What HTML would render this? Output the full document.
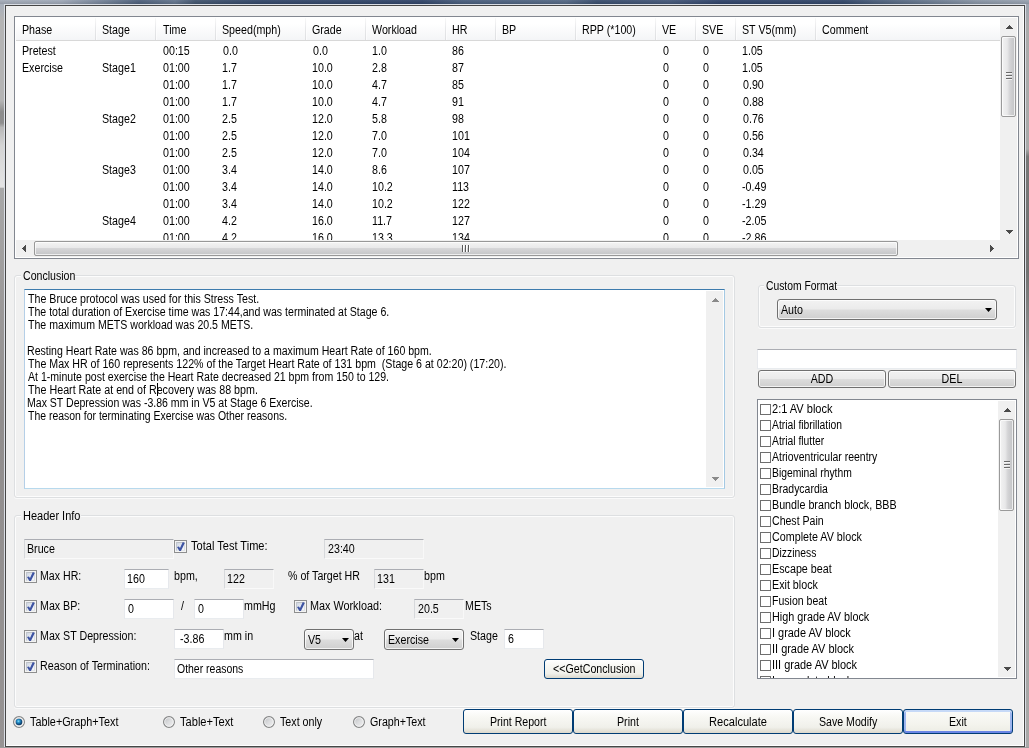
<!DOCTYPE html>
<html><head><meta charset="utf-8"><title>Stress Test Report</title>
<style>
html,body{margin:0;padding:0}
body{width:1029px;height:748px;overflow:hidden;position:relative;background:#f0f0f0;font-family:"Liberation Sans",sans-serif}
div,span,svg.abs{position:absolute;box-sizing:content-box}
#root{left:0;top:0;width:1029px;height:748px;will-change:transform}
.t{white-space:pre;font:12px/13px "Liberation Sans",sans-serif;color:#000;transform-origin:0 0;transform:scaleX(0.89)}
.c{text-align:center}
.clip{overflow:hidden}
#ftop{left:0;top:0;width:1029px;height:4px;background:linear-gradient(90deg,#a5adba 0,#a0a9b8 6%,#6f7e94 10.6%,#4f617c 13.5%,#66778f 17%,#43566f 19%,#34486a 25%,#32466a 41%,#4a5f7e 45%,#566a86 55%,#3a4e6e 58%,#46597a 65%,#30446a 70%,#34486a 82%,#4c5f7b 85%,#6a7a90 90%,#8a96a6 95%,#9aa4b2 100%)}
#ftop:after{content:"";position:absolute;left:0;top:0;width:1029px;height:4px;background:linear-gradient(180deg,rgba(255,255,255,.06),rgba(0,0,0,.1))}
#fleft{left:0;top:4px;width:4px;height:744px;background:linear-gradient(180deg,#a8b0bc 0,#b4b4b4 2%,#b4b4b4 13%,#8c8c8c 14.5%,#8e8e8e 16%,#b8b8b8 16.6%,#d4d4d4 19%,#e4e4e4 24.6%,#a8a8a8 24.8%,#9c9a9a 40%,#918e8e 56%,#969393 100%)}
#fright{left:1026px;top:4px;width:3px;height:744px;background:linear-gradient(180deg,#9ea6b2 0,#ababab 3%,#a9a9a9 19.5%,#787878 20.5%,#727272 36%,#8c8c8c 44%,#a4a4a4 50%,#a8a8a8 100%)}
#fbot{left:0;top:747px;width:1029px;height:1px;background:#9c9c9c}
#flight{left:4px;top:4px;width:1022px;height:743px;background:#d9dde4}
#fdark{left:5px;top:5px;width:1020px;height:742px;background:#464646}
#client{left:6px;top:6px;width:1017px;height:739px;border:solid #fff;border-width:0 1px 1px 0;background:#f0f0f0}
.lv{border:1px solid #828790;background:#fff}
.lvh{background:linear-gradient(180deg,#fff 0,#fff 25%,#f4f5f7 100%)}
.sep{background:linear-gradient(180deg,#f8f8f8,#e6e7e9 50%,#dedfe1)}
.sepw{background:linear-gradient(180deg,#fff,#fbfbfc)}
.sbtrack{background:#f0f0f0}
.vthumb{border:1px solid #9a9a9a;border-radius:2px;box-sizing:border-box;background:linear-gradient(90deg,#f3f3f3 0,#e8e8e9 40%,#d4d4d6 60%,#c2c3c5 100%);box-shadow:inset 0 0 0 1px rgba(255,255,255,.7)}
.vthumb i{position:absolute;left:4px;width:6px;height:1px;background:#6a6a6a;box-shadow:0 1px 0 #f4f4f4}
.hthumb{border:1px solid #989898;border-radius:2px;box-sizing:border-box;background:linear-gradient(180deg,#f4f4f4 0,#e9e9ea 45%,#d6d6d8 50%,#c4c5c7 100%);box-shadow:inset 0 0 0 1px rgba(255,255,255,.7)}
.hthumb i{position:absolute;top:3px;width:1px;height:7px;background:#5a5a5a;box-shadow:1px 0 0 #fff}
.gb{border:1px solid #dddfe1;border-radius:3px;box-shadow:inset 0 0 0 1px #fcfcfc,0 1px 0 #fafafa}
.edit{border:1px solid;border-color:#abadb3 #e6e8ec #e9ecef #e6e8ec;background:#fff}
.edit.ro{background:#f0f0f0;border-color:#abadb3 #f8f8f8 #fafafa #d6d8db}
.edit.focus{border-color:#3d7bad #a4c9e3 #b7d9ed #b5cfe7}
.combo{border:1px solid #707070;border-radius:3px;background:linear-gradient(180deg,#f2f2f2 0,#ebebeb 48%,#dddddd 52%,#cfcfcf 100%);box-shadow:inset 0 0 0 1px rgba(255,255,255,.75)}
.w7btn{border:1px solid #707070;border-radius:3px;background:linear-gradient(180deg,#f2f2f2 0,#ebebeb 48%,#dddddd 52%,#cfcfcf 100%);box-shadow:inset 0 0 0 1px rgba(255,255,255,.75)}
.clb{border:1px solid #828790;background:#fff}
.fcb{border:1px solid #6e6e6e;background:#fff}
.cb{border:1px solid #8e8f8f;background:#f4f4f4}
.cb b{position:absolute;left:1px;top:1px;width:7px;height:7px;border:1px solid;border-color:#bcc0c6 #dcdfe3 #e3e6e9 #c3c7cd;background:linear-gradient(135deg,#cfd6e2,#e9edf4 60%,#f6f7fa)}
.cb svg{position:absolute;left:-1px;top:-1px}
.radio{border:1px solid #8e8f8f;border-radius:50%;background:radial-gradient(circle at 50% 50%,#fdfdfd 0,#e9e9e9 60%,#d6d6d6 100%)}
.radio.on b{position:absolute;left:2px;top:2px;width:6px;height:6px;border-radius:50%;background:radial-gradient(circle at 40% 35%,#8fe0f5 0,#2aa0d8 35%,#14507f 80%,#0d3a66 100%)}
.xpbtn{border:1px solid #003c74;border-radius:3px;background:linear-gradient(180deg,#fff 0,#f8f8f4 30%,#f0f0ea 75%,#dcd8cc 100%)}
.xpbtn.def{box-shadow:inset 0 2px 0 #c6d9f7,inset 0 -2px 0 #6b86e6,inset 2px 0 0 #9db5ee,inset -2px 0 0 #9db5ee;background:linear-gradient(180deg,#fbfbf8 0,#f4f4ee 60%,#ecece4 100%)}
</style></head>
<body>
<div id="root">
<div id="ftop"></div><div id="fleft"></div><div id="fright"></div><div id="fbot"></div>
<div id="flight"></div><div id="fdark"></div><div id="client"></div>
<div class="lv" style="left:14px;top:16px;width:1003px;height:241px;"></div>
<div class="lvh" style="left:16px;top:18px;width:984px;height:22px;"></div>
<div class="" style="left:16px;top:40px;width:984px;height:1px;background:#d8d8d8"></div>
<span class="t" style="left:22px;top:24px;">Phase</span>
<span class="t" style="left:102px;top:24px;">Stage</span>
<div class="sep" style="left:95px;top:18px;width:1px;height:22px;"></div>
<div class="sepw" style="left:96px;top:18px;width:1px;height:22px;"></div>
<span class="t" style="left:163px;top:24px;">Time</span>
<div class="sep" style="left:155px;top:18px;width:1px;height:22px;"></div>
<div class="sepw" style="left:156px;top:18px;width:1px;height:22px;"></div>
<span class="t" style="left:222px;top:24px;">Speed(mph)</span>
<div class="sep" style="left:215px;top:18px;width:1px;height:22px;"></div>
<div class="sepw" style="left:216px;top:18px;width:1px;height:22px;"></div>
<span class="t" style="left:312px;top:24px;">Grade</span>
<div class="sep" style="left:305px;top:18px;width:1px;height:22px;"></div>
<div class="sepw" style="left:306px;top:18px;width:1px;height:22px;"></div>
<span class="t" style="left:372px;top:24px;">Workload</span>
<div class="sep" style="left:365px;top:18px;width:1px;height:22px;"></div>
<div class="sepw" style="left:366px;top:18px;width:1px;height:22px;"></div>
<span class="t" style="left:452px;top:24px;">HR</span>
<div class="sep" style="left:445px;top:18px;width:1px;height:22px;"></div>
<div class="sepw" style="left:446px;top:18px;width:1px;height:22px;"></div>
<span class="t" style="left:502px;top:24px;">BP</span>
<div class="sep" style="left:495px;top:18px;width:1px;height:22px;"></div>
<div class="sepw" style="left:496px;top:18px;width:1px;height:22px;"></div>
<span class="t" style="left:582px;top:24px;">RPP (*100)</span>
<div class="sep" style="left:575px;top:18px;width:1px;height:22px;"></div>
<div class="sepw" style="left:576px;top:18px;width:1px;height:22px;"></div>
<span class="t" style="left:662px;top:24px;">VE</span>
<div class="sep" style="left:655px;top:18px;width:1px;height:22px;"></div>
<div class="sepw" style="left:656px;top:18px;width:1px;height:22px;"></div>
<span class="t" style="left:702px;top:24px;">SVE</span>
<div class="sep" style="left:695px;top:18px;width:1px;height:22px;"></div>
<div class="sepw" style="left:696px;top:18px;width:1px;height:22px;"></div>
<span class="t" style="left:742px;top:24px;">ST V5(mm)</span>
<div class="sep" style="left:735px;top:18px;width:1px;height:22px;"></div>
<div class="sepw" style="left:736px;top:18px;width:1px;height:22px;"></div>
<span class="t" style="left:822px;top:24px;">Comment</span>
<div class="sep" style="left:815px;top:18px;width:1px;height:22px;"></div>
<div class="sepw" style="left:816px;top:18px;width:1px;height:22px;"></div>
<div class="clip" style="left:16px;top:41px;width:984px;height:199px">
<span class="t" style="left:6px;top:4px;">Pretest</span>
<span class="t" style="left:147px;top:4px;">00:15</span>
<span class="t" style="left:207px;top:4px;">0.0</span>
<span class="t" style="left:297px;top:4px;">0.0</span>
<span class="t" style="left:356px;top:4px;">1.0</span>
<span class="t" style="left:436px;top:4px;">86</span>
<span class="t" style="left:647px;top:4px;">0</span>
<span class="t" style="left:687px;top:4px;">0</span>
<span class="t" style="left:726px;top:4px;">1.05</span>
<span class="t" style="left:6px;top:21px;">Exercise</span>
<span class="t" style="left:86px;top:21px;">Stage1</span>
<span class="t" style="left:147px;top:21px;">01:00</span>
<span class="t" style="left:206px;top:21px;">1.7</span>
<span class="t" style="left:296px;top:21px;">10.0</span>
<span class="t" style="left:356px;top:21px;">2.8</span>
<span class="t" style="left:436px;top:21px;">87</span>
<span class="t" style="left:647px;top:21px;">0</span>
<span class="t" style="left:687px;top:21px;">0</span>
<span class="t" style="left:726px;top:21px;">1.05</span>
<span class="t" style="left:147px;top:38px;">01:00</span>
<span class="t" style="left:206px;top:38px;">1.7</span>
<span class="t" style="left:296px;top:38px;">10.0</span>
<span class="t" style="left:356px;top:38px;">4.7</span>
<span class="t" style="left:436px;top:38px;">85</span>
<span class="t" style="left:647px;top:38px;">0</span>
<span class="t" style="left:687px;top:38px;">0</span>
<span class="t" style="left:727px;top:38px;">0.90</span>
<span class="t" style="left:147px;top:55px;">01:00</span>
<span class="t" style="left:206px;top:55px;">1.7</span>
<span class="t" style="left:296px;top:55px;">10.0</span>
<span class="t" style="left:356px;top:55px;">4.7</span>
<span class="t" style="left:436px;top:55px;">91</span>
<span class="t" style="left:647px;top:55px;">0</span>
<span class="t" style="left:687px;top:55px;">0</span>
<span class="t" style="left:727px;top:55px;">0.88</span>
<span class="t" style="left:86px;top:72px;">Stage2</span>
<span class="t" style="left:147px;top:72px;">01:00</span>
<span class="t" style="left:206px;top:72px;">2.5</span>
<span class="t" style="left:296px;top:72px;">12.0</span>
<span class="t" style="left:356px;top:72px;">5.8</span>
<span class="t" style="left:436px;top:72px;">98</span>
<span class="t" style="left:647px;top:72px;">0</span>
<span class="t" style="left:687px;top:72px;">0</span>
<span class="t" style="left:727px;top:72px;">0.76</span>
<span class="t" style="left:147px;top:89px;">01:00</span>
<span class="t" style="left:206px;top:89px;">2.5</span>
<span class="t" style="left:296px;top:89px;">12.0</span>
<span class="t" style="left:356px;top:89px;">7.0</span>
<span class="t" style="left:436px;top:89px;">101</span>
<span class="t" style="left:647px;top:89px;">0</span>
<span class="t" style="left:687px;top:89px;">0</span>
<span class="t" style="left:727px;top:89px;">0.56</span>
<span class="t" style="left:147px;top:106px;">01:00</span>
<span class="t" style="left:206px;top:106px;">2.5</span>
<span class="t" style="left:296px;top:106px;">12.0</span>
<span class="t" style="left:356px;top:106px;">7.0</span>
<span class="t" style="left:436px;top:106px;">104</span>
<span class="t" style="left:647px;top:106px;">0</span>
<span class="t" style="left:687px;top:106px;">0</span>
<span class="t" style="left:727px;top:106px;">0.34</span>
<span class="t" style="left:86px;top:123px;">Stage3</span>
<span class="t" style="left:147px;top:123px;">01:00</span>
<span class="t" style="left:206px;top:123px;">3.4</span>
<span class="t" style="left:296px;top:123px;">14.0</span>
<span class="t" style="left:356px;top:123px;">8.6</span>
<span class="t" style="left:436px;top:123px;">107</span>
<span class="t" style="left:647px;top:123px;">0</span>
<span class="t" style="left:687px;top:123px;">0</span>
<span class="t" style="left:727px;top:123px;">0.05</span>
<span class="t" style="left:147px;top:140px;">01:00</span>
<span class="t" style="left:206px;top:140px;">3.4</span>
<span class="t" style="left:296px;top:140px;">14.0</span>
<span class="t" style="left:356px;top:140px;">10.2</span>
<span class="t" style="left:436px;top:140px;">113</span>
<span class="t" style="left:647px;top:140px;">0</span>
<span class="t" style="left:687px;top:140px;">0</span>
<span class="t" style="left:726px;top:140px;">-0.49</span>
<span class="t" style="left:147px;top:157px;">01:00</span>
<span class="t" style="left:206px;top:157px;">3.4</span>
<span class="t" style="left:296px;top:157px;">14.0</span>
<span class="t" style="left:356px;top:157px;">10.2</span>
<span class="t" style="left:436px;top:157px;">122</span>
<span class="t" style="left:647px;top:157px;">0</span>
<span class="t" style="left:687px;top:157px;">0</span>
<span class="t" style="left:726px;top:157px;">-1.29</span>
<span class="t" style="left:86px;top:174px;">Stage4</span>
<span class="t" style="left:147px;top:174px;">01:00</span>
<span class="t" style="left:206px;top:174px;">4.2</span>
<span class="t" style="left:296px;top:174px;">16.0</span>
<span class="t" style="left:356px;top:174px;">11.7</span>
<span class="t" style="left:436px;top:174px;">127</span>
<span class="t" style="left:647px;top:174px;">0</span>
<span class="t" style="left:687px;top:174px;">0</span>
<span class="t" style="left:726px;top:174px;">-2.05</span>
<span class="t" style="left:147px;top:191px;">01:00</span>
<span class="t" style="left:206px;top:191px;">4.2</span>
<span class="t" style="left:296px;top:191px;">16.0</span>
<span class="t" style="left:356px;top:191px;">13.3</span>
<span class="t" style="left:436px;top:191px;">134</span>
<span class="t" style="left:647px;top:191px;">0</span>
<span class="t" style="left:687px;top:191px;">0</span>
<span class="t" style="left:726px;top:191px;">-2.86</span>
</div>
<div class="sbtrack" style="left:1000px;top:18px;width:17px;height:222px;"></div>
<div class="vthumb" style="left:1001px;top:36px;width:15px;height:81px;"><i style="top:35px"></i><i style="top:38px"></i><i style="top:41px"></i></div>
<svg class="abs" style="left:1006px;top:25px" width="7" height="4" shape-rendering="crispEdges"><path d="M3 0h1v1h-1zM2 1h3v1h-3zM1 2h5v1h-5zM0 3h7v1h-7z" fill="#4a4a4a"/></svg>
<svg class="abs" style="left:1006px;top:230px" width="7" height="4" shape-rendering="crispEdges"><path d="M0 0h7v1h-7zM1 1h5v1h-5zM2 2h3v1h-3zM3 3h1v1h-1z" fill="#4a4a4a"/></svg>
<div class="sbtrack" style="left:16px;top:240px;width:1001px;height:17px;"></div>
<div class="hthumb" style="left:34px;top:241px;width:864px;height:15px;"><i style="left:427px"></i><i style="left:430px"></i><i style="left:433px"></i></div>
<svg class="abs" style="left:22px;top:245px" width="4" height="7" shape-rendering="crispEdges"><path d="M3 0h1v7h-1zM2 1h1v5h-1zM1 2h1v3h-1zM0 3h1v1h-1z" fill="#4a4a4a"/></svg>
<svg class="abs" style="left:990px;top:245px" width="4" height="7" shape-rendering="crispEdges"><path d="M0 0h1v7h-1zM1 1h1v5h-1zM2 2h1v3h-1zM3 3h1v1h-1z" fill="#4a4a4a"/></svg>
<div class="gb" style="left:14px;top:275px;width:719px;height:221px;"></div>
<div class="" style="left:21px;top:273px;width:54px;height:6px;background:#f0f0f0"></div>
<span class="t" style="left:23px;top:270px;transform:scaleX(0.882);">Conclusion</span>
<div class="edit focus" style="left:24px;top:289px;width:699px;height:198px;"></div>
<span class="t" style="left:28px;top:293px;transform:scaleX(0.887);">The Bruce protocol was used for this Stress Test.</span>
<span class="t" style="left:28px;top:306px;transform:scaleX(0.882);">The total duration of Exercise time was 17:44,and was terminated at Stage 6.</span>
<span class="t" style="left:28px;top:319px;transform:scaleX(0.882);">The maximum METS workload was 20.5 METS.</span>
<span class="t" style="left:27px;top:345px;transform:scaleX(0.882);">Resting Heart Rate was 86 bpm, and increased to a maximum Heart Rate of 160 bpm.</span>
<span class="t" style="left:28px;top:358px;transform:scaleX(0.886);">The Max HR of 160 represents 122% of the Target Heart Rate of 131 bpm  (Stage 6 at 02:20) (17:20).</span>
<span class="t" style="left:28px;top:371px;transform:scaleX(0.88);">At 1-minute post exercise the Heart Rate decreased 21 bpm from 150 to 129.</span>
<span class="t" style="left:28px;top:384px;transform:scaleX(0.893);">The Heart Rate at end of Recovery was 88 bpm.</span>
<span class="t" style="left:27px;top:397px;transform:scaleX(0.878);">Max ST Depression was -3.86 mm in V5 at Stage 6 Exercise.</span>
<span class="t" style="left:28px;top:410px;transform:scaleX(0.871);">The reason for terminating Exercise was Other reasons.</span>
<div class="" style="left:157px;top:383px;width:1px;height:13px;background:#000"></div>
<div class="sbtrack" style="left:706px;top:291px;width:17px;height:196px;"></div>
<svg class="abs" style="left:712px;top:298px" width="7" height="4" shape-rendering="crispEdges"><path d="M3 0h1v1h-1zM2 1h3v1h-3zM1 2h5v1h-5zM0 3h7v1h-7z" fill="#8a8a8a"/></svg>
<svg class="abs" style="left:712px;top:477px" width="7" height="4" shape-rendering="crispEdges"><path d="M0 0h7v1h-7zM1 1h5v1h-5zM2 2h3v1h-3zM3 3h1v1h-1z" fill="#8a8a8a"/></svg>
<div class="gb" style="left:758px;top:285px;width:256px;height:41px;"></div>
<div class="" style="left:764px;top:283px;width:72px;height:6px;background:#f0f0f0"></div>
<span class="t" style="left:766px;top:280px;transform:scaleX(0.86);">Custom Format</span>
<div class="combo" style="left:777px;top:299px;width:218px;height:19px;"></div>
<span class="t" style="left:781px;top:304px;">Auto</span>
<svg class="abs" style="left:985px;top:308px" width="7" height="4"><path d="M0 0 H7 L3.5 4 Z" fill="#000"/></svg>
<div class="edit" style="left:757px;top:349px;width:258px;height:18px;"></div>
<div class="w7btn" style="left:758px;top:370px;width:126px;height:16px;"></div>
<span class="t c" style="left:758px;top:373px;width:143.82px;">ADD</span>
<div class="w7btn" style="left:888px;top:370px;width:126px;height:16px;"></div>
<span class="t c" style="left:888px;top:373px;width:143.82px;">DEL</span>
<div class="clb" style="left:757px;top:399px;width:258px;height:278px;"></div>
<div class="clip" style="left:758px;top:400px;width:240px;height:278px">
<div class="fcb" style="left:2px;top:4px;width:9px;height:9px;"></div>
<span class="t" style="left:14px;top:3px;transform:scaleX(0.92);">2:1 AV block</span>
<div class="fcb" style="left:2px;top:20px;width:9px;height:9px;"></div>
<span class="t" style="left:14px;top:19px;transform:scaleX(0.86);">Atrial fibrillation</span>
<div class="fcb" style="left:2px;top:36px;width:9px;height:9px;"></div>
<span class="t" style="left:14px;top:35px;transform:scaleX(0.86);">Atrial flutter</span>
<div class="fcb" style="left:2px;top:52px;width:9px;height:9px;"></div>
<span class="t" style="left:14px;top:51px;transform:scaleX(0.872);">Atrioventricular reentry</span>
<div class="fcb" style="left:2px;top:68px;width:9px;height:9px;"></div>
<span class="t" style="left:14px;top:67px;transform:scaleX(0.861);">Bigeminal rhythm</span>
<div class="fcb" style="left:2px;top:84px;width:9px;height:9px;"></div>
<span class="t" style="left:14px;top:83px;transform:scaleX(0.873);">Bradycardia</span>
<div class="fcb" style="left:2px;top:100px;width:9px;height:9px;"></div>
<span class="t" style="left:14px;top:99px;transform:scaleX(0.894);">Bundle branch block, BBB</span>
<div class="fcb" style="left:2px;top:116px;width:9px;height:9px;"></div>
<span class="t" style="left:14px;top:115px;transform:scaleX(0.88);">Chest Pain</span>
<div class="fcb" style="left:2px;top:132px;width:9px;height:9px;"></div>
<span class="t" style="left:14px;top:131px;transform:scaleX(0.895);">Complete AV block</span>
<div class="fcb" style="left:2px;top:148px;width:9px;height:9px;"></div>
<span class="t" style="left:14px;top:147px;transform:scaleX(0.863);">Dizziness</span>
<div class="fcb" style="left:2px;top:164px;width:9px;height:9px;"></div>
<span class="t" style="left:14px;top:163px;transform:scaleX(0.895);">Escape beat</span>
<div class="fcb" style="left:2px;top:180px;width:9px;height:9px;"></div>
<span class="t" style="left:14px;top:179px;transform:scaleX(0.893);">Exit block</span>
<div class="fcb" style="left:2px;top:196px;width:9px;height:9px;"></div>
<span class="t" style="left:14px;top:195px;transform:scaleX(0.878);">Fusion beat</span>
<div class="fcb" style="left:2px;top:212px;width:9px;height:9px;"></div>
<span class="t" style="left:14px;top:211px;transform:scaleX(0.902);">High grade AV block</span>
<div class="fcb" style="left:2px;top:228px;width:9px;height:9px;"></div>
<span class="t" style="left:14px;top:227px;transform:scaleX(0.911);">I grade AV block</span>
<div class="fcb" style="left:2px;top:244px;width:9px;height:9px;"></div>
<span class="t" style="left:14px;top:243px;transform:scaleX(0.913);">II grade AV block</span>
<div class="fcb" style="left:2px;top:260px;width:9px;height:9px;"></div>
<span class="t" style="left:14px;top:259px;transform:scaleX(0.913);">III grade AV block</span>
<div class="fcb" style="left:2px;top:276px;width:9px;height:9px;"></div>
<span class="t" style="left:14px;top:275px;">Incomplete block</span>
</div>
<div class="sbtrack" style="left:998px;top:401px;width:17px;height:276px;"></div>
<div class="vthumb" style="left:999px;top:419px;width:15px;height:92px;"><i style="top:41px"></i><i style="top:44px"></i><i style="top:47px"></i></div>
<svg class="abs" style="left:1004px;top:408px" width="7" height="4" shape-rendering="crispEdges"><path d="M3 0h1v1h-1zM2 1h3v1h-3zM1 2h5v1h-5zM0 3h7v1h-7z" fill="#4a4a4a"/></svg>
<svg class="abs" style="left:1004px;top:667px" width="7" height="4" shape-rendering="crispEdges"><path d="M0 0h7v1h-7zM1 1h5v1h-5zM2 2h3v1h-3zM3 3h1v1h-1z" fill="#4a4a4a"/></svg>
<div class="gb" style="left:14px;top:515px;width:719px;height:191px;"></div>
<div class="" style="left:21px;top:513px;width:60px;height:6px;background:#f0f0f0"></div>
<span class="t" style="left:23px;top:510px;transform:scaleX(0.916);">Header Info</span>
<div class="edit ro" style="left:24px;top:539px;width:148px;height:18px;"></div>
<span class="t" style="left:27px;top:543px;">Bruce</span>
<div class="cb" style="left:174px;top:540px;width:11px;height:11px;"><b></b><svg width="13" height="13" viewBox="0 0 13 13"><path d="M3 7.1 L4.9 6.4 L6 8 L8.8 2.1 L10.8 2.9 L6.9 10.9 L5.3 10.9 Z" fill="#3d53a2"/></svg></div>
<span class="t" style="left:191px;top:540px;transform:scaleX(0.921);">Total Test Time:</span>
<div class="edit ro" style="left:324px;top:539px;width:98px;height:18px;"></div>
<span class="t" style="left:328px;top:543px;">23:40</span>
<div class="cb" style="left:24px;top:570px;width:11px;height:11px;"><b></b><svg width="13" height="13" viewBox="0 0 13 13"><path d="M3 7.1 L4.9 6.4 L6 8 L8.8 2.1 L10.8 2.9 L6.9 10.9 L5.3 10.9 Z" fill="#3d53a2"/></svg></div>
<span class="t" style="left:40px;top:570px;transform:scaleX(0.884);">Max HR:</span>
<div class="edit" style="left:124px;top:569px;width:43px;height:18px;"></div>
<span class="t" style="left:127px;top:573px;">160</span>
<span class="t" style="left:174px;top:570px;">bpm,</span>
<div class="edit ro" style="left:224px;top:569px;width:48px;height:18px;"></div>
<span class="t" style="left:227px;top:573px;">122</span>
<span class="t" style="left:288px;top:570px;transform:scaleX(0.887);">% of Target HR</span>
<div class="edit ro" style="left:374px;top:569px;width:48px;height:18px;"></div>
<span class="t" style="left:377px;top:573px;">131</span>
<span class="t" style="left:424px;top:570px;">bpm</span>
<div class="cb" style="left:24px;top:600px;width:11px;height:11px;"><b></b><svg width="13" height="13" viewBox="0 0 13 13"><path d="M3 7.1 L4.9 6.4 L6 8 L8.8 2.1 L10.8 2.9 L6.9 10.9 L5.3 10.9 Z" fill="#3d53a2"/></svg></div>
<span class="t" style="left:40px;top:600px;transform:scaleX(0.888);">Max BP:</span>
<div class="edit" style="left:124px;top:599px;width:48px;height:18px;"></div>
<span class="t" style="left:128px;top:603px;">0</span>
<span class="t" style="left:181px;top:600px;">/</span>
<div class="edit" style="left:194px;top:599px;width:48px;height:18px;"></div>
<span class="t" style="left:198px;top:603px;">0</span>
<span class="t" style="left:244px;top:600px;">mmHg</span>
<div class="cb" style="left:294px;top:600px;width:11px;height:11px;"><b></b><svg width="13" height="13" viewBox="0 0 13 13"><path d="M3 7.1 L4.9 6.4 L6 8 L8.8 2.1 L10.8 2.9 L6.9 10.9 L5.3 10.9 Z" fill="#3d53a2"/></svg></div>
<span class="t" style="left:310px;top:600px;transform:scaleX(0.902);">Max Workload:</span>
<div class="edit ro" style="left:414px;top:599px;width:48px;height:18px;"></div>
<span class="t" style="left:418px;top:603px;">20.5</span>
<span class="t" style="left:465px;top:600px;">METs</span>
<div class="cb" style="left:24px;top:630px;width:11px;height:11px;"><b></b><svg width="13" height="13" viewBox="0 0 13 13"><path d="M3 7.1 L4.9 6.4 L6 8 L8.8 2.1 L10.8 2.9 L6.9 10.9 L5.3 10.9 Z" fill="#3d53a2"/></svg></div>
<span class="t" style="left:40px;top:630px;transform:scaleX(0.888);">Max ST Depression:</span>
<div class="edit" style="left:174px;top:629px;width:48px;height:18px;"></div>
<span class="t" style="left:180px;top:633px;">-3.86</span>
<span class="t" style="left:224px;top:630px;">mm in</span>
<div class="combo" style="left:304px;top:629px;width:48px;height:19px;"></div>
<span class="t" style="left:308px;top:634px;">V5</span>
<svg class="abs" style="left:342px;top:638px" width="7" height="4"><path d="M0 0 H7 L3.5 4 Z" fill="#000"/></svg>
<span class="t" style="left:354px;top:630px;">at</span>
<div class="combo" style="left:384px;top:629px;width:78px;height:19px;"></div>
<span class="t" style="left:388px;top:634px;">Exercise</span>
<svg class="abs" style="left:452px;top:638px" width="7" height="4"><path d="M0 0 H7 L3.5 4 Z" fill="#000"/></svg>
<span class="t" style="left:470px;top:630px;">Stage</span>
<div class="edit" style="left:504px;top:629px;width:38px;height:18px;"></div>
<span class="t" style="left:508px;top:633px;">6</span>
<div class="cb" style="left:24px;top:660px;width:11px;height:11px;"><b></b><svg width="13" height="13" viewBox="0 0 13 13"><path d="M3 7.1 L4.9 6.4 L6 8 L8.8 2.1 L10.8 2.9 L6.9 10.9 L5.3 10.9 Z" fill="#3d53a2"/></svg></div>
<span class="t" style="left:40px;top:660px;transform:scaleX(0.893);">Reason of Termination:</span>
<div class="edit" style="left:174px;top:659px;width:198px;height:18px;"></div>
<span class="t" style="left:177px;top:663px;transform:scaleX(0.872);">Other reasons</span>
<div class="xpbtn " style="left:544px;top:659px;width:98px;height:18px;"></div>
<span class="t" style="left:553px;top:663px;">&lt;&lt;GetConclusion</span>
<svg class="abs" width="0" height="0" style="left:0;top:0"><defs><radialGradient id="rd" cx="42%" cy="38%" r="65%"><stop offset="0" stop-color="#8fdcf5"/><stop offset=".3" stop-color="#2b9bd4"/><stop offset=".65" stop-color="#14578a"/><stop offset="1" stop-color="#0a2f57"/></radialGradient><linearGradient id="rb" x1="0" y1="0" x2="1" y2="1"><stop offset="0" stop-color="#b9bbbe"/><stop offset=".5" stop-color="#dcdddf"/><stop offset="1" stop-color="#f4f4f4"/></linearGradient></defs></svg>
<svg class="abs" style="left:12px;top:715px" width="14" height="14"><circle cx="7" cy="7" r="5.4" fill="url(#rb)" stroke="#868787" stroke-width="1.2"/><circle cx="7" cy="7" r="4.3" fill="none" stroke="#fbfbfb" stroke-width=".8" opacity=".9"/><circle cx="7" cy="7" r="3.3" fill="url(#rd)"/></svg>
<span class="t" style="left:30px;top:716px;transform:scaleX(0.902);">Table+Graph+Text</span>
<svg class="abs" style="left:162px;top:715px" width="14" height="14"><circle cx="7" cy="7" r="5.4" fill="url(#rb)" stroke="#868787" stroke-width="1.2"/><circle cx="7" cy="7" r="4.3" fill="none" stroke="#fbfbfb" stroke-width=".8" opacity=".9"/></svg>
<span class="t" style="left:180px;top:716px;transform:scaleX(0.925);">Table+Text</span>
<svg class="abs" style="left:262px;top:715px" width="14" height="14"><circle cx="7" cy="7" r="5.4" fill="url(#rb)" stroke="#868787" stroke-width="1.2"/><circle cx="7" cy="7" r="4.3" fill="none" stroke="#fbfbfb" stroke-width=".8" opacity=".9"/></svg>
<span class="t" style="left:280px;top:716px;transform:scaleX(0.891);">Text only</span>
<svg class="abs" style="left:352px;top:715px" width="14" height="14"><circle cx="7" cy="7" r="5.4" fill="url(#rb)" stroke="#868787" stroke-width="1.2"/><circle cx="7" cy="7" r="4.3" fill="none" stroke="#fbfbfb" stroke-width=".8" opacity=".9"/></svg>
<span class="t" style="left:370px;top:716px;transform:scaleX(0.891);">Graph+Text</span>
<div class="xpbtn " style="left:463px;top:709px;width:108px;height:23px;"></div>
<span class="t" style="left:490px;top:716px;transform:scaleX(0.882);">Print Report</span>
<div class="xpbtn " style="left:573px;top:709px;width:108px;height:23px;"></div>
<span class="t" style="left:617px;top:716px;">Print</span>
<div class="xpbtn " style="left:683px;top:709px;width:108px;height:23px;"></div>
<span class="t" style="left:709px;top:716px;transform:scaleX(0.925);">Recalculate</span>
<div class="xpbtn " style="left:793px;top:709px;width:108px;height:23px;"></div>
<span class="t" style="left:819px;top:716px;transform:scaleX(0.883);">Save Modify</span>
<div class="xpbtn def" style="left:903px;top:709px;width:108px;height:23px;"></div>
<span class="t" style="left:949px;top:716px;">Exit</span>
</div>
</body></html>
